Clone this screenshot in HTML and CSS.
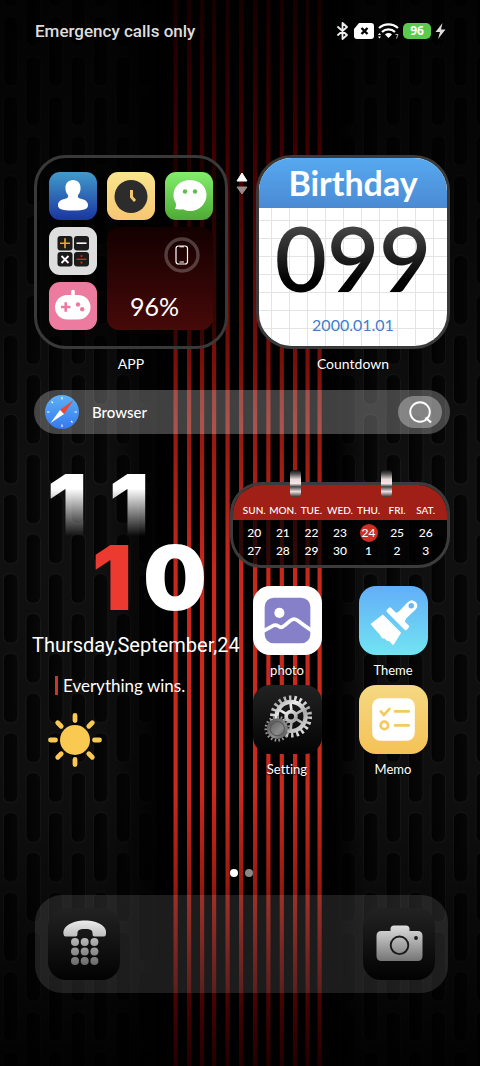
FILE: index.html
```html
<!DOCTYPE html>
<html lang="en">
  <head>
    <meta charset="UTF-8" />
    <meta name="viewport" content="width=device-width, initial-scale=1.0" />
    <title>Home Screen</title>
    <link rel="stylesheet" href="styles.css">
  </head>
  <body>
    <!-- Wallpaper: slotted metal on both sides, red stripes in the middle -->
    <svg class="wallpaper" viewBox="0 0 480 1066" preserveAspectRatio="xMidYMid slice" aria-hidden="true">
      <defs>
        <linearGradient id="slotFill" x1="0" y1="0" x2="1" y2="0">
          <stop offset="0" stop-color="#030303" />
          <stop offset="1" stop-color="#080808" />
        </linearGradient>
        <pattern id="slots" x="25" y="215" width="45" height="79.6" patternUnits="userSpaceOnUse">
          <rect width="45" height="79.6" fill="#101010" />
          <g fill="url(#slotFill)" stroke="#181818" stroke-width="1">
            <rect x="1" y="0.500" width="14.500" height="69.500" rx="6" />
            <rect x="23.500" y="40.300" width="14.500" height="69.500" rx="6" />
            <rect x="23.500" y="-39.300" width="14.500" height="69.500" rx="6" />
          </g>
        </pattern>
        <linearGradient id="stripe" gradientUnits="userSpaceOnUse" x1="0" y1="0" x2="0" y2="1066">
          <stop offset="0" stop-color="#160000" />
          <stop offset="0.14" stop-color="#3c0000" />
          <stop offset="0.34" stop-color="#78100a" />
          <stop offset="0.44" stop-color="#a01e14" />
          <stop offset="0.54" stop-color="#c8281c" />
          <stop offset="0.74" stop-color="#cc291d" />
          <stop offset="0.83" stop-color="#981a10" />
          <stop offset="0.93" stop-color="#4a0402" />
          <stop offset="1" stop-color="#220000" />
        </linearGradient>
        <linearGradient id="shade" x1="0" y1="0" x2="0" y2="1">
          <stop offset="0" stop-color="#000" stop-opacity="0.8" />
          <stop offset="0.15" stop-color="#000" stop-opacity="0.6" />
          <stop offset="0.45" stop-color="#000" stop-opacity="0" />
          <stop offset="0.75" stop-color="#000" stop-opacity="0.1" />
          <stop offset="1" stop-color="#000" stop-opacity="0.85" />
        </linearGradient>
        <linearGradient id="side" x1="0" y1="0" x2="1" y2="0">
          <stop offset="0.22" stop-color="#000" stop-opacity="0" />
          <stop offset="0.33" stop-color="#000" stop-opacity="0.9" />
          <stop offset="0.7" stop-color="#000" stop-opacity="0.9" />
          <stop offset="0.76" stop-color="#000" stop-opacity="0" />
        </linearGradient>
      </defs>
      <rect width="480" height="1066" fill="#000" />
      <rect width="157" height="1066" fill="url(#slots)" />
      <rect x="336" width="144" height="1066" fill="url(#slots)" />
      <rect width="480" height="1066" fill="url(#side)" />
      <rect width="480" height="1066" fill="url(#shade)" />
      <g fill="url(#stripe)">
        <rect x="173.5" width="4.2" height="1066" />
        <rect x="187" width="4.2" height="1066" />
        <rect x="200" width="4.2" height="1066" />
        <rect x="212" width="4.2" height="1066" />
        <rect x="225.5" width="4.2" height="1066" />
        <rect x="239" width="4.2" height="1066" />
        <rect x="253" width="4.2" height="1066" />
        <rect x="266.3" width="4.2" height="1066" />
        <rect x="279.7" width="4.2" height="1066" />
        <rect x="293" width="4.2" height="1066" />
        <rect x="305.5" width="4.2" height="1066" />
        <rect x="317.5" width="4.2" height="1066" />
      </g>
    </svg>

    <header class="status">
      <span class="carrier">Emergency calls only</span>
      <div class="status-icons">
        <svg width="14" height="18" viewBox="0 0 14 18" aria-label="Bluetooth">
          <path d="M2 5l9 8-4.500 4V1L11 5l-9 8" fill="none" stroke="#eee" stroke-width="1.800" stroke-linejoin="round" stroke-linecap="round" />
        </svg>
        <svg width="20" height="16" viewBox="0 0 20 16" aria-label="No SIM">
          <path d="M5 0h12a3 3 0 0 1 3 3v10a3 3 0 0 1-3 3H3a3 3 0 0 1-3-3V6z" fill="#fff" />
          <path d="M7.500 5l6 6m0-6l-6 6" stroke="#000" stroke-width="2.400" />
        </svg>
        <svg width="21" height="16" viewBox="0 0 21 16" aria-label="Wi-Fi">
          <g fill="none" stroke="#fff" stroke-width="2.200">
            <path d="M1 5a14 14 0 0 1 19 0" />
            <path d="M4 9a9.500 9.500 0 0 1 13 0" />
          </g>
          <path d="M7 11.500a5 5 0 0 1 7 0L10.500 15z" fill="#fff" />
          <path d="M0 12l1.500-2L3 12zM0 13.500h3L1.500 15.500z" fill="#fff" />
          <path d="M17.500 11.500h2.500l-1.500 4" fill="none" stroke="#ccc" stroke-width="0.900" />
        </svg>
        <span class="battery-pill">96</span>
        <svg width="11" height="16" viewBox="0 0 11 16" aria-label="Charging">
          <path d="M7.500 0L0.500 9H5L3 16l7.500-9.500H6z" fill="#ddd" />
        </svg>
      </div>
    </header>

    <main class="screen">
      <section class="widgets">
        <div class="widget">
          <div class="folder">
            <a class="mini contacts" href="#" aria-label="Contacts">
              <svg viewBox="0 0 48 48">
                <path d="M24 8c5 0 8 4 7.500 8.500 0 3-1 5-2.500 6.500-.5 2 0 3 2 3.500C36 27.500 39 29.500 39 33c0 4-3 5.500-15 5.500S9 37 9 33c0-3.500 3-5.500 8-6.500 2-.5 2.500-1.500 2-3.500-1.500-1.500-2.500-3.500-2.500-6.500C16 12 19 8 24 8z" fill="#fff" />
              </svg>
            </a>
            <a class="mini clock-app" href="#" aria-label="Clock">
              <svg viewBox="0 0 48 48">
                <circle cx="24" cy="24.500" r="16.500" fill="#2c2c2c" />
                <path d="M24.500 18v7l3.500 4" fill="none" stroke="#f6c869" stroke-width="3" />
              </svg>
            </a>
            <a class="mini chat" href="#" aria-label="Messages">
              <svg viewBox="0 0 48 48">
                <path d="M25 8c9.500 0 16.500 6.500 16.500 15S34.500 39 25 39c-3 0-5-.7-7-1.800-2.500.3-5 .3-8-.2 1-2 1.200-4 .8-6C9 28.500 8.500 26 8.500 23 8.500 14.500 15.500 8 25 8z" fill="#fff" />
                <circle cx="20" cy="19.500" r="2.200" fill="#5cc04a" />
                <circle cx="30" cy="19.500" r="2.200" fill="#5cc04a" />
              </svg>
            </a>
            <a class="mini calc" href="#" aria-label="Calculator">
              <svg viewBox="0 0 48 48">
                <g fill="#1b1b1b">
                  <rect x="8.500" y="9" width="15" height="14.500" rx="3" />
                  <rect x="25" y="9" width="15" height="14.500" rx="3" />
                  <rect x="8.500" y="25" width="15" height="14.500" rx="3" />
                  <rect x="25" y="25" width="15" height="14.500" rx="3" />
                </g>
                <path d="M11 16.200h10M16 11.200v10" stroke="#f0a53a" stroke-width="1.600" />
                <path d="M27.500 16.200h10" stroke="#fff" stroke-width="1.600" />
                <path d="M12.500 29l7 7m0-7l-7 7" stroke="#fff" stroke-width="1.800" />
                <path d="M27.500 32.300h10" stroke="#c62f20" stroke-width="1.400" />
                <circle cx="32.500" cy="29" r="1.100" fill="#c62f20" />
                <circle cx="32.500" cy="35.600" r="1.100" fill="#c62f20" />
              </svg>
            </a>
            <div class="battery">
              <svg width="36" height="36" viewBox="0 0 36 36" aria-hidden="true">
                <circle cx="18" cy="18" r="16" fill="none" stroke="#fff" stroke-opacity="0.230" stroke-width="3.400" />
                <rect x="12" y="9" width="11.500" height="18" rx="2.500" fill="none" stroke="#fff" stroke-width="1.200" />
                <path d="M15.500 9.800h4.500M15.500 25h4.500" stroke="#fff" stroke-width="1" />
              </svg>
              <span>96%</span>
            </div>
            <a class="mini games" href="#" aria-label="Games">
              <svg viewBox="0 0 48 48">
                <path d="M24 9.500v6" stroke="#fff" stroke-width="3.600" stroke-linecap="round" />
                <rect x="6" y="13" width="35.500" height="24.500" rx="12.250" fill="#fff" />
                <path d="M12 25h9.500M16.700 20.300v9.500" stroke="#ed7b9f" stroke-width="2.600" />
                <circle cx="29" cy="22.500" r="2.200" fill="#ed7b9f" />
                <circle cx="33.200" cy="27.300" r="2.200" fill="#ed7b9f" />
              </svg>
            </a>
          </div>
          <span class="label">APP</span>
        </div>

        <svg class="arrows" width="12" height="24" viewBox="0 0 12 24" aria-hidden="true">
          <path d="M6 1l5 8H1z" fill="#fff" stroke="#fff" stroke-linejoin="round" />
          <path d="M6 22l5-7H1z" fill="#9c8886" stroke="#9c8886" stroke-linejoin="round" />
        </svg>

        <div class="widget">
          <div class="countdown">
            <h2>Birthday</h2>
            <div class="countdown-body">
              <strong>099</strong>
              <time datetime="2000-01-01">2000.01.01</time>
            </div>
          </div>
          <span class="label">Countdown</span>
        </div>
      </section>

      <div class="search">
        <a href="#">
          <svg width="34" height="34" viewBox="0 0 34 34" aria-hidden="true">
            <defs>
              <linearGradient id="compass" x1="0" y1="0" x2="0" y2="1">
                <stop offset="0" stop-color="#5cb2f7" />
                <stop offset="1" stop-color="#3678f0" />
              </linearGradient>
            </defs>
            <circle cx="17" cy="17" r="17" fill="url(#compass)" />
            <path d="M17 2v2.500M17 29.500V32M2 17h2.500M29.500 17H32M6.500 6.500l1.500 1.500M26 26l1.500 1.500" stroke="#fff" stroke-width="1.100" />
            <path d="M28.500 5L19 19l-4-4z" fill="#f0452f" />
            <path d="M5.500 28L15 15l4 4z" fill="#fff" />
          </svg>
          Browser
        </a>
        <button type="button" aria-label="Search">
          <svg width="26" height="26" viewBox="0 0 26 26">
            <circle cx="13" cy="13" r="9.800" fill="none" stroke="#fff" stroke-width="1.900" />
            <path d="M18.500 18.500l5.500 5" stroke="#fff" stroke-width="2.200" />
          </svg>
        </button>
      </div>

      <section class="lower">
        <div class="today">
          <div class="time">
            <div class="hours"><span>1</span><span>1</span></div>
            <div class="minutes"><span>1</span><span>0</span></div>
          </div>
          <p class="date">Thursday,September,24</p>
          <p class="motto">Everything wins.</p>
          <svg class="sun" width="54" height="54" viewBox="0 0 54 54" aria-label="Sunny">
            <circle cx="27" cy="27" r="15" fill="#f9c952" />
            <g stroke="#f9c952" stroke-width="4.800" stroke-linecap="round">
              <path d="M27 2.500v5M27 46.500v5M2.500 27h5M46.500 27h5" />
              <path d="M9.700 9.700l3.500 3.500M40.800 40.800l3.500 3.500M9.700 44.300l3.500-3.500M40.800 13.200l3.500-3.500" />
            </g>
          </svg>
        </div>

        <div class="side">
          <div class="calendar">
            <i class="ring ring-left"></i>
            <i class="ring ring-right"></i>
            <table>
              <thead>
                <tr><th>SUN.</th><th>MON.</th><th>TUE.</th><th>WED.</th><th>THU.</th><th>FRI.</th><th>SAT.</th></tr>
              </thead>
              <tbody>
                <tr><td>20</td><td>21</td><td>22</td><td>23</td><td><span class="current">24</span></td><td>25</td><td>26</td></tr>
                <tr><td>27</td><td>28</td><td>29</td><td>30</td><td>1</td><td>2</td><td>3</td></tr>
              </tbody>
            </table>
          </div>

          <nav class="apps">
            <a class="app" href="#">
              <span class="icon photo">
                <svg viewBox="0 0 68 68">
                  <rect x="11.500" y="11.500" width="45" height="45" rx="9" fill="#8580c8" />
                  <circle cx="26" cy="26.500" r="5" fill="#fff" />
                  <path d="M10 44.500l9-5q3-2 6 0 3 2.500 6-.5l6-5q3.500-2.500 7 0 7 5.500 14 10" fill="none" stroke="#fff" stroke-width="3.600" />
                </svg>
              </span>
              photo
            </a>
            <a class="app" href="#">
              <span class="icon theme">
                <svg viewBox="0 0 68 68">
                  <g fill="#fff">
                    <path d="M23.500 28L41.500 46 34.500 57.500q-1 1-2 0l-2.500-3q-3 0-4.500-2.500-3.500 0-4.500-3.500L12 38.500q-.8-1 0-1.500z" />
                    <path d="M31.500 21.500l17.500 17.500q1 1 0 2l-2 2q-1 1-2 0L27.500 25.500q-1-1 0-2l2-2q1-1 2 0z" />
                    <path d="M34 26.500q4.500.5 7.500-3.500l6-6.500q4-4.500 8-1t0 8L48.500 30q-4 3.500-3.500 8z" />
                  </g>
                  <circle cx="51.500" cy="19.500" r="2.700" fill="#66b9f8" />
                </svg>
              </span>
              Theme
            </a>
            <a class="app" href="#">
              <span class="icon setting">
                <svg viewBox="0 0 68 68">
                  <defs>
                    <linearGradient id="steel" gradientUnits="userSpaceOnUse" x1="20" y1="12" x2="52" y2="52">
                      <stop offset="0" stop-color="#888" />
                      <stop offset="0.350" stop-color="#eee" />
                      <stop offset="0.600" stop-color="#a8a8a8" />
                      <stop offset="1" stop-color="#f4f4f4" />
                    </linearGradient>
                    <linearGradient id="iron" x1="0" y1="0" x2="1" y2="1">
                      <stop offset="0" stop-color="#4a4a4a" />
                      <stop offset="0.600" stop-color="#8c8c8c" />
                      <stop offset="1" stop-color="#444" />
                    </linearGradient>
                  </defs>
                  <g fill="none" stroke="url(#steel)">
                    <circle cx="37.500" cy="31" r="18.200" stroke-width="5" stroke-dasharray="2.400 2.798" />
                    <circle cx="37.500" cy="31" r="14.300" stroke-width="4.200" />
                    <circle cx="37.500" cy="31" r="4.800" stroke-width="3.600" />
                    <path d="M37 18l1 8M37 44l1-8M26 24.500l7.500 4.500M49 24.500L41.500 29M26 37.500l7.500-4.500M49 37.500L41.500 33" stroke-width="2.600" />
                  </g>
                  <circle cx="24" cy="43" r="11.400" fill="none" stroke="#999" stroke-width="2.600" stroke-dasharray="1.600 2.179" />
                  <circle cx="24" cy="43" r="10.300" fill="url(#iron)" />
                  <circle cx="24" cy="43" r="7" fill="none" stroke="#555" stroke-width="1" />
                </svg>
              </span>
              Setting
            </a>
            <a class="app" href="#">
              <span class="icon memo">
                <svg viewBox="0 0 68 68">
                  <rect x="13" y="13" width="42" height="42" rx="8" fill="#fff" />
                  <g fill="none" stroke="#f6c862" stroke-width="2.600" stroke-linecap="round">
                    <path d="M21.500 26l3 3.500 5.500-6M35.500 26H49M35.500 39.800H49" />
                    <circle cx="25" cy="39.800" r="3.700" />
                  </g>
                </svg>
              </span>
              Memo
            </a>
          </nav>
        </div>
      </section>

      <div class="pager"><span class="active"></span><span></span></div>

      <nav class="dock">
        <a href="#" aria-label="Phone">
          <svg viewBox="0 0 72 72">
            <defs>
              <linearGradient id="silver" gradientUnits="userSpaceOnUse" x1="0" y1="12" x2="0" y2="60">
                <stop offset="0" stop-color="#eee" />
                <stop offset="1" stop-color="#606060" />
              </linearGradient>
            </defs>
            <g fill="url(#silver)">
              <path d="M15.500 26c-1-8 9-13.500 21.500-13.500S59.500 18 58 26q-.3 2.500-2 2.500H46.500q-2 0-2-2.500c.2-3.500-1-5-7.500-5s-7.700 1.500-7.500 5q0 2.500-2 2.500H17.500q-1.700 0-2-2.500z" />
              <circle cx="27" cy="34" r="4" /><circle cx="36.700" cy="34" r="4" /><circle cx="46.400" cy="34" r="4" />
              <circle cx="27" cy="43.500" r="4" /><circle cx="36.700" cy="43.500" r="4" /><circle cx="46.400" cy="43.500" r="4" />
              <circle cx="27" cy="53" r="4" /><circle cx="36.700" cy="53" r="4" /><circle cx="46.400" cy="53" r="4" />
            </g>
          </svg>
        </a>
        <a href="#" aria-label="Camera">
          <svg viewBox="0 0 72 72">
            <path d="M18.500 23H27.500V20.500q.5-3 3.500-3H43q3 0 3.500 3V23H54.500q5 0 5 5V48q0 5-5 5H18.500q-5 0-5-5V28q0-5 5-5z" fill="url(#silver)" />
            <circle cx="36.500" cy="37.300" r="8.800" fill="none" stroke="#1a1a1a" stroke-width="1.900" />
            <circle cx="53" cy="30" r="1.900" fill="#1a1a1a" />
          </svg>
        </a>
      </nav>
    </main>
  </body>
</html>
```
FILE: styles.css
```css
* {
  box-sizing: border-box;
}
body {
  position: relative;
  min-height: 100vh;
  margin: 0;
  background-color: #000;
  color: #fff;
  font-family: Lato, "Open Sans", sans-serif;
  font-variant-ligatures: none;
}
a {
  color: inherit;
  text-decoration: none;
}
svg {
  display: block;
}
.wallpaper {
  position: absolute;
  inset: 0;
  width: 100%;
  height: 100%;
  z-index: -1;
}

/* status bar */
.status {
  display: flex;
  justify-content: space-between;
  align-items: center;
  padding: 20px 34px 0 35px;
  font-family: Roboto, sans-serif;
}
.carrier {
  color: #ddd;
  font-size: 17px;
  font-weight: 500;
  line-height: 22px;
}
.status-icons {
  display: flex;
  align-items: center;
  gap: 4px;
}
.battery-pill {
  width: 28px;
  border-radius: 5px;
  background-color: #5ccb4c;
  font-family: "Open Sans", sans-serif;
  font-size: 12px;
  font-weight: 700;
  line-height: 16px;
  text-align: center;
}

.screen {
  padding: 113px 30px 0 34px;
}

/* top widgets */
.widgets {
  display: flex;
  justify-content: space-between;
}
.widget {
  display: flex;
  flex-direction: column;
  align-items: center;
  width: 194px;
}
.label {
  margin-top: 6px;
  font-size: 14px;
  line-height: 18px;
  text-shadow: 0 0 2px #000;
}
.folder {
  display: grid;
  grid-template-columns: repeat(3, 48px);
  gap: 7px 10px;
  padding: 14px 12px 16px;
  border: 3px solid #393939;
  border-radius: 32px;
  background-color: rgba(0, 0, 0, 0.5);
}
.mini {
  height: 48px;
  border-radius: 11px;
}
.contacts {
  background: linear-gradient(#419bcb, #1b35a0);
}
.clock-app {
  background: linear-gradient(#f9e58d, #f6c672);
}
.chat {
  background: linear-gradient(#83ee6b, #4eaa35);
}
.calc {
  background-color: #dedede;
}
.games {
  background-color: #ed7b9f;
}
.battery {
  grid-column: 2 / 4;
  grid-row: 2 / 4;
  display: flex;
  flex-direction: column;
  justify-content: space-between;
  padding: 10px 13px 10px 23px;
  border-radius: 12px;
  background: linear-gradient(#140000, #470909);
  font-size: 25px;
  line-height: 28px;
}
.battery svg {
  align-self: flex-end;
}
.arrows {
  margin-top: 17px;
}
.countdown {
  width: 100%;
  height: 194px;
  overflow: hidden;
  border: 3px solid #3a3a3a;
  border-radius: 36px;
  background-color: #fff;
}
.countdown h2 {
  margin: 0;
  background: linear-gradient(#57a9f0, #4a8ad3);
  font-size: 34px;
  font-weight: 700;
  line-height: 50px;
  text-align: center;
}
.countdown-body {
  display: flex;
  flex-direction: column;
  align-items: center;
  height: 138px;
  background-image: linear-gradient(#e4e4e4 1px, transparent 1px), linear-gradient(90deg, #e4e4e4 1px, transparent 1px);
  background-size: 18px 18px;
  background-position: 12px 12px;
}
.countdown-body strong {
  background: linear-gradient(#444 20%, #000 75%);
  -webkit-background-clip: text;
  background-clip: text;
  color: transparent;
  font-size: 90px;
  font-weight: 600;
  line-height: 98px;
}
.countdown-body time {
  margin-top: 7px;
  color: #3f80c6;
  font-size: 16px;
  line-height: 24px;
}

/* browser bar */
.search {
  display: flex;
  justify-content: space-between;
  align-items: center;
  height: 44px;
  margin-top: 17px;
  padding: 0 8px 0 11px;
  border-radius: 22px;
  background-color: rgba(255, 255, 255, 0.25);
}
.search a {
  display: flex;
  align-items: center;
  gap: 13px;
  font-size: 15px;
  font-weight: 500;
}
.search button {
  display: flex;
  justify-content: center;
  align-items: center;
  width: 44px;
  height: 32px;
  padding: 0;
  border: none;
  border-radius: 16px;
  background-color: rgba(255, 255, 255, 0.32);
  cursor: pointer;
}

/* clock, date and weather */
.lower {
  display: flex;
  margin-top: 37px;
}
.today {
  flex: 1;
  width: 0;
}
.time {
  font-family: Inter, sans-serif;
  font-size: 90px;
  font-weight: 900;
  line-height: 71px;
}
.time div {
  display: flex;
}
.time span {
  width: 62px;
  text-align: center;
}
.hours {
  padding-left: 2px;
}
.hours span {
  background: linear-gradient(#fff 25%, rgba(255, 255, 255, 0) 92%);
  -webkit-background-clip: text;
  background-clip: text;
  color: transparent;
}
.minutes {
  padding-left: 47px;
}
.minutes span:first-child {
  color: #ec3a30;
}
.date {
  margin: 20px -2px 0;
  font-family: Roboto, sans-serif;
  font-size: 20px;
  line-height: 24px;
  white-space: nowrap;
}
.motto {
  margin: 19px 0 0 21px;
  padding-left: 5px;
  border-left: 3px solid #c8372c;
  font-size: 17px;
  line-height: 19px;
  white-space: nowrap;
}
.sun {
  margin: 18px 0 0 14px;
}

/* calendar */
.side {
  width: 220px;
}
.calendar {
  position: relative;
  height: 86px;
  margin-top: 11px;
  border: 3px solid #3c3c3c;
  border-radius: 32px;
  background: linear-gradient(#a01f16 35px, rgba(0, 0, 0, 0.75) 35px);
  background-clip: padding-box;
}
.calendar table {
  width: 100%;
  padding: 0 7px;
  border-spacing: 0;
  table-layout: fixed;
}
.calendar th {
  height: 39px;
  padding: 19px 0 0;
  font-size: 10px;
  font-weight: 500;
  line-height: 12px;
  vertical-align: top;
}
.calendar td {
  height: 18px;
  padding: 0;
  font-size: 12px;
  font-weight: 500;
  line-height: 18px;
  text-align: center;
}
.current {
  display: block;
  width: 18px;
  margin: 0 auto;
  border-radius: 9px;
  background-color: #cf2e26;
}
.ring {
  position: absolute;
  top: -15px;
  width: 11px;
  height: 27px;
  border-radius: 4px;
  background: linear-gradient(#111, #555 15%, #e8dada 35%, #f4e6e6 50%, #444 62%, #eedede 80%, #333);
}
.ring-left {
  left: 57px;
}
.ring-right {
  right: 55px;
}

/* app icons */
.apps {
  display: grid;
  grid-template-columns: 1fr 1fr;
  gap: 7px 0;
  margin-top: 18px;
  padding: 0 4px;
}
.app {
  display: flex;
  flex-direction: column;
  align-items: center;
  font-size: 13px;
  line-height: 16px;
  text-shadow: 0 1px 2px #000;
}
.icon {
  width: 69px;
  height: 69px;
  margin-bottom: 7px;
  border-radius: 17px;
}
.photo {
  background-color: #fff;
}
.theme {
  background: linear-gradient(#62aef8, #72e4f2);
}
.setting {
  background: linear-gradient(#222, #030303);
}
.memo {
  background: linear-gradient(#f5d982, #f5c257);
}

/* page dots */
.pager {
  display: flex;
  justify-content: center;
  gap: 7px;
  margin-top: 92px;
  padding-right: 2px;
}
.pager span {
  width: 8px;
  height: 8px;
  border-radius: 50%;
  background-color: #8b8787;
}
.pager .active {
  background-color: #fff;
}

/* dock */
.dock {
  display: flex;
  justify-content: space-between;
  margin: 18px 2px 0 1px;
  padding: 13px;
  border-radius: 27px;
  background-color: rgba(255, 255, 255, 0.11);
}
.dock a {
  width: 72px;
  height: 72px;
  border-radius: 18px;
  background: linear-gradient(#222, #020202);
}
```
